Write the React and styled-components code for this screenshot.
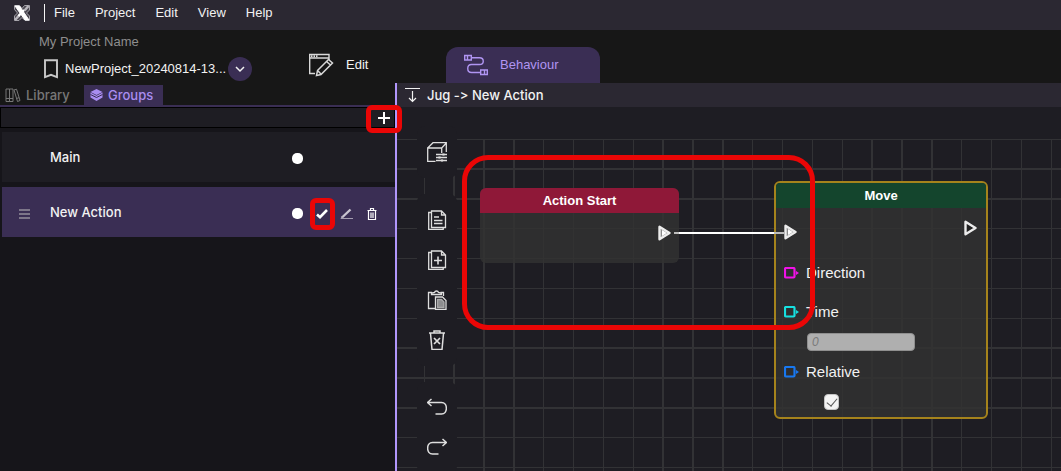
import React from 'react';
import styled, { createGlobalStyle, css } from 'styled-components';

const GlobalStyle = createGlobalStyle`
  * { box-sizing: border-box; }
  body {
    margin: 0;
    background: #16151a;
    color: #f2f2f2;
    font-family: "Liberation Sans", Arial, sans-serif;
    font-size: 13px;
    line-height: 16px;
  }
  button, input { font: inherit; color: inherit; }
`;

const panelFont = css`
  font-family: Inter, "Liberation Sans", sans-serif;
  font-size: 13px;
  font-weight: 500;
`;

const Page = styled.div`
  display: flex;
  flex-direction: column;
  min-height: 100vh;
  overflow: hidden;
`;

const BareButton = styled.button`
  display: flex;
  align-items: center;
  justify-content: center;
  padding: 0;
  border: 0;
  background: none;
  cursor: pointer;
`;

const Icon = styled.svg`
  display: block;
  flex: none;
  fill: none;
  stroke: currentColor;
`;

/* Menu bar */
const MenuBar = styled.nav`
  display: flex;
  align-items: center;
  height: 30px;
  padding: 0 0 4px 13px;
  background: #2b2832;
`;

const MenuList = styled.div`
  display: flex;
  align-items: center;
  gap: 20px;
  height: 18px;
  margin-left: 13px;
  padding-left: 9px;
  border-left: 1px solid #f5f5f5;
`;

/* Header */
const Header = styled.header`
  display: flex;
  height: 53px;
  background: #171717;
`;

const Project = styled.div`
  width: 308px;
  padding: 4px 0 0 39px;
`;

const ProjectLabel = styled.div`
  color: #8e8e8e;
`;

const ProjectRow = styled.div`
  display: flex;
  align-items: center;
  height: 24px;
  margin-top: 7px;
  padding-left: 5px;
  gap: 7px;
  white-space: nowrap;
`;

const ProjectName = styled.span`
  width: 156px;
`;

const RoundButton = styled(BareButton)`
  width: 24px;
  height: 24px;
  border-radius: 50%;
  background: #3a2e54;
`;

const ModeTab = styled(BareButton)`
  justify-content: flex-start;
  gap: 12px;
  height: 36px;
  margin-top: 17px;
  ${p => p.$active
    ? css`width: 154px; padding-left: 18px; background: #3a2e54; color: #b095f2; border-radius: 12px 12px 0 0;`
    : css`width: 138px;`}
`;

/* Main area */
const Main = styled.main`
  display: flex;
  flex: 1;
`;

const SidePanel = styled.aside`
  display: flex;
  flex-direction: column;
  flex: none;
  width: 397px;
  border-right: 2px solid #b196fb;
  background: #16151a;
`;

const PanelTabs = styled.div`
  display: flex;
  align-items: flex-end;
  height: 24px;
  padding-left: 5px;
  border-bottom: 2px solid #3a2e54;
  background: #171717;
`;

const PanelTab = styled(BareButton)`
  ${panelFont}
  justify-content: flex-start;
  gap: 5px;
  height: 20px;
  width: 79px;
  color: ${p => (p.$active ? '#a98df0' : '#777777')};
  background: ${p => (p.$active ? '#3a2e54' : 'transparent')};
  padding-left: ${p => (p.$active ? '6px' : '0')};
`;

const PanelActions = styled.div`
  display: flex;
  justify-content: flex-end;
  height: 21px;
  border: 1px solid #000;
  padding-right: 2px;
  background: #1e1d23;
`;

const AddButton = styled(BareButton)`
  position: relative;
  width: 16px;
  color: #fff;
`;

const Highlight = styled.span`
  position: absolute;
  z-index: 2;
  pointer-events: none;
  border: 5px solid #ea0606;
  ${p => p.$kind === 'add' && css`inset: -3px -10px -6px -10px; border-radius: 6px;`}
  ${p => p.$kind === 'tick' && css`inset: -8px -5px -8px -4px; border-radius: 6px;`}
  ${p => p.$kind === 'link' && css`left: 65px; top: 48px; width: 353px; height: 175px; border-radius: 26px;`}
`;

const GroupList = styled.ul`
  display: flex;
  flex-direction: column;
  gap: 5px;
  margin: 0;
  padding: 4px 0 0 2px;
  list-style: none;
`;

const GroupRow = styled.li`
  ${panelFont}
  display: flex;
  align-items: center;
  height: 50px;
  padding-left: 17px;
  background: ${p => (p.$active ? '#3a2e54' : '#1e1d23')};
`;

const Handle = styled.span`
  width: 11px;
  height: 10px;
  margin-top: 3px;
  border: solid #7d7689;
  border-width: 2px 0;
  background: linear-gradient(#7d7689, #7d7689) center / 100% 2px no-repeat;
  visibility: ${p => (p.$shown ? 'visible' : 'hidden')};
`;

const GroupName = styled.span`
  width: 234px;
  margin-left: 20px;
`;

const RowTools = styled.div`
  display: flex;
  align-items: center;
  gap: 9px;
  padding: 3px 0 0 5px;
`;

const RowTool = styled(BareButton)`
  position: relative;
  width: 16px;
  height: 16px;
  color: #fff;
`;

const Dot = styled.span`
  width: 11px;
  height: 11px;
  border-radius: 5px;
  background: #fff;
`;

/* Canvas */
const Workspace = styled.section`
  display: flex;
  flex-direction: column;
  flex: 1;
  min-width: 0;
`;

const Breadcrumb = styled.div`
  ${panelFont}
  display: flex;
  align-items: center;
  height: 24px;
  padding-left: 8px;
  gap: 7px;
  background: #2b2832;
  font-variant-ligatures: none;
  font-feature-settings: "calt" 0;
`;

const Canvas = styled.div`
  position: relative;
  flex: 1;
  padding-top: 32px;
  background: #1e1d23;
  overflow: hidden;
`;

const Grid = styled.svg`
  position: absolute;
  left: 0;
  top: 32px;
  width: 100%;
  height: 100%;
`;

const ToolColumn = styled.div`
  position: absolute;
  left: 20px;
  top: 19px;
  display: flex;
  flex-direction: column;
  gap: 16px;
`;

const ToolGroup = styled.div`
  display: flex;
  flex-direction: column;
  padding: 6px 0;
  border-radius: 8px;
  background: #1e1d23;
`;

const Tool = styled(BareButton)`
  width: 40px;
  height: 40px;
  color: #dedede;
  stroke-width: 1.3;
`;

const Node = styled.article`
  position: absolute;
  left: ${p => p.$x}px;
  top: ${p => p.$y}px;
  width: ${p => p.$w}px;
  border-radius: 6px;
  overflow: hidden;
  background: rgba(50, 50, 50, 0.84);
  ${p => p.$selected && css`border: 2px solid #a5831c;`}
`;

const NodeTitle = styled.h2`
  margin: 0;
  height: 25px;
  font-size: 13px;
  line-height: 25px;
  font-weight: 700;
  text-align: center;
  color: #fff;
  background: ${p => p.$color};
`;

const StartBody = styled.div`
  display: flex;
  justify-content: flex-end;
  height: 50px;
  padding: 12px 8px 0 0;
`;

const MoveBody = styled.div`
  padding: 12px 9px 0 8px;
  height: 209px;
`;

const FlowRow = styled.div`
  display: flex;
  justify-content: space-between;
  height: 20px;
  margin-bottom: 23px;
`;

const FlowSlot = styled.span`
  display: flex;
  align-self: ${p => (p.$raised ? 'flex-start' : 'flex-end')};
`;

const PortRow = styled.div`
  display: flex;
  align-items: center;
  gap: 6px;
  height: 20px;
  margin-bottom: ${p => (p.$gap ? '19px' : '0')};
  font-size: 15px;
`;

const FieldRow = styled.div`
  display: flex;
  height: ${p => p.$height}px;
  padding: ${p => (p.$tick ? '12px 0 0 40px' : '11px 0 0 23px')};
`;

const NumberInput = styled.input`
  width: 108px;
  height: 18px;
  padding: 0 4px;
  border: 1px solid #8f8f8f;
  border-radius: 4px;
  background: #afafaf;
  font-size: 12px;
  font-style: italic;
  &::placeholder { color: #7a7a7a; opacity: 1; }
`;

const TickBox = styled.input`
  appearance: none;
  position: relative;
  width: 15px;
  height: 16px;
  margin: 0;
  border: 1px solid #c4c4c4;
  border-radius: 4px;
  background: #f4f4f4;
  &:checked::after {
    content: "";
    position: absolute;
    left: 4px;
    top: 1px;
    width: 5px;
    height: 9px;
    border: solid #555;
    border-width: 0 1px 1px 0;
    transform: rotate(40deg);
  }
`;

const Wire = styled.span`
  position: absolute;
  left: 277px;
  top: 125px;
  width: 110px;
  height: 2px;
  background: linear-gradient(90deg, #bdbdbd 5px, #fff 5px, #fff 100px, #bdbdbd 100px);
`;

function Logo() {
  return (
    <Icon width="18" height="18" viewBox="0 0 18 18" aria-label="Home" role="img">
      <path d="M1.500 5.500v-4h5l2.500 3 2.500-3h5v4.500l-3 3 3 3v4.500h-4.500l-3-3-3 3h-4.500v-4.500l3-3z" stroke="#a5a3aa" fill="#4a4750" />
      <path d="M11.500 6.500L15.500 2M2 16l4.500-5" stroke="#b9b7bd" strokeWidth="2.500" />
      <path d="M2 2h4.500L16 16h-4z" fill="#fff" stroke="#fff" />
      <path d="M5.500 12l5.500-6" stroke="#fff" strokeWidth="2.400" />
    </Icon>
  );
}

function FlowPort({ linked }) {
  return (
    <Icon width="13" height="16" viewBox="0 0 13 16">
      <path d="M1.500 1.800v12.400L11.500 8z" stroke="#ececec" strokeWidth="2.400" strokeLinejoin="round" fill={linked ? '#8a8a8a' : '#222'} />
      {linked && <path d="M4 5v6L8.800 8z" fill="#fff" stroke="none" />}
    </Icon>
  );
}

function DataPort({ color }) {
  return (
    <Icon width="16" height="12" viewBox="0 0 16 12">
      <rect x="1" y="1" width="9.500" height="9.500" rx="1" stroke={color} strokeWidth="2.200" />
      <path d="M12 4l3 2-3 2z" fill={color} stroke="none" />
    </Icon>
  );
}

const toolIcons = {
  'Object properties': (
    <>
      <path d="M8.500 19.500H.7V6h14v5M.7 6L6 .7h13.300V10M14.700 6L19.300 1" />
      <path d="M9 12.500h11M9 15.500h11M9 18.500h11" />
      <path d="M16.500 11.500v2M12.500 14.500v2M15 17.500v2" strokeWidth="2.200" />
    </>
  ),
  Copy: (
    <>
      <path d="M4.500 1h10l4 4v12.500h-14zM14.500 1v4h4" />
      <path d="M4.500 2.500H1.700v17h14.500v-2" />
      <path d="M7 7h5M7 10.500h8.500M7 13.500h8.500" />
    </>
  ),
  Duplicate: (
    <>
      <path d="M4.500 1h10l4 4v12.500h-14zM14.500 1v4h4" />
      <path d="M4.500 2.500H1.700v17h14.500v-2" />
      <path d="M11 6.500v8M7 10.500h8" strokeWidth="1.600" />
    </>
  ),
  Paste: (
    <>
      <path d="M5 2.500H1.500v16h7M13.500 2.500h3V6" />
      <path d="M4.500 4.500V3l3-.5C8 .5 11 .5 11.500 2.500l3 .5v1.500z" />
      <path d="M8.500 7h7l3.500 3.500v9h-10.500z" />
      <path d="M10.500 9.500h4l2.500 2.500v5.500h-6.500z" fill="#8d8d8f" stroke="#aaa" />
    </>
  ),
  Delete: (
    <>
      <path d="M2 3h16M7 3V1h6v2M3.500 3.500l1.500 16h10l1.500-16" strokeWidth="1.500" />
      <path d="M7 8l6 6M13 8l-6 6" strokeWidth="1.700" />
    </>
  ),
  Undo: <path d="M4.500 1l-4 3.500 4 3.500M.5 4.500h14c6.500 0 6.500 11.500 0 11.500H8.500" strokeWidth="1.500" />,
  Redo: <path d="M15.500 1l4 3.500-4 3.500M19.500 4.500h-14c-6.500 0-6.500 11.500 0 11.500h6" strokeWidth="1.500" />,
};

const toolGroups = [
  ['Object properties'],
  ['Copy', 'Duplicate', 'Paste', 'Delete'],
  ['Undo', 'Redo'],
];

const gridLines = [
  [0, 2], [30, 2], [60, 2], [90, 1], [120, 1], [150, 1], [180, 1],
];

export default function App() {
  return (
    <Page>
      <GlobalStyle />
      <MenuBar>
        <Logo />
        <MenuList>
          {['File', 'Project', 'Edit', 'View', 'Help'].map(name => (
            <BareButton key={name}>{name}</BareButton>
          ))}
        </MenuList>
      </MenuBar>

      <Header>
        <Project>
          <ProjectLabel>My Project Name</ProjectLabel>
          <ProjectRow>
            <Icon width="14" height="20" viewBox="0 0 14 20">
              <path d="M1 1.200h12v17L7 15.800 1 18.200z" stroke="#c9c9c9" strokeWidth="1.900" />
            </Icon>
            <ProjectName>NewProject_20240814-13...</ProjectName>
            <RoundButton aria-label="Choose project">
              <Icon width="10" height="8" viewBox="0 0 10 8">
                <path d="M1 2l4 4 4-4" strokeWidth="1.500" />
              </Icon>
            </RoundButton>
          </ProjectRow>
        </Project>
        <ModeTab>
          <Icon width="26" height="24" viewBox="0 0 26 24">
            <path d="M21 7V1.500H1.700V20.500H7M1.500 5H21" stroke="#d8d8d8" strokeWidth="1.400" />
            <path d="M3 3.200h7" stroke="#d8d8d8" strokeWidth="2" strokeDasharray="1.500 1" />
            <path d="M9.500 17.500L20.500 6.500l4 3.500L13 21.500l-4.500 1zM9.500 17.500l3.500 3.500M18.500 8.500l4 3.500" stroke="#d8d8d8" strokeWidth="1.500" />
          </Icon>
          Edit
        </ModeTab>
        <ModeTab $active>
          <Icon width="24" height="22" viewBox="0 0 24 22">
            <path d="M.7 1.500h6.600v4.500H.7zM3.500 2v4M16.700 16h6.600v4.500h-6.600zM20.500 16v4" strokeWidth="1.400" />
            <path d="M8 3.800h7.500c5 0 5 6.700 0 6.700h-8c-5 0-5 8 0 8H16" strokeWidth="1.400" />
          </Icon>
          Behaviour
        </ModeTab>
      </Header>

      <Main>
        <SidePanel>
          <PanelTabs>
            <PanelTab>
              <Icon width="16" height="15" viewBox="0 0 16 15">
                <path d="M1 1h3.500v12.500H1zM4.500 1H8v12.500H4.500zM1 10.500h7M9 2l2.500-.8L15 12.500l-2.500 1zM11.500 10.500l2.500-.8" />
              </Icon>
              Library
            </PanelTab>
            <PanelTab $active>
              <Icon width="13" height="14" viewBox="0 0 13 14">
                <path d="M6.500 1l6 3-6 3-6-3z" fill="currentColor" stroke="none" />
                <path d="M.5 4.500v5l6 3.500 6-3.500v-5l-6 3.300z" fill="currentColor" stroke="none" />
                <path d="M.5 6.500l6 3 6-3" stroke="#3a2e54" />
              </Icon>
              Groups
            </PanelTab>
          </PanelTabs>
          <PanelActions>
            <AddButton aria-label="Add group">
              <Icon width="12" height="12" viewBox="0 0 12 12">
                <path d="M6 0v12M0 6h12" strokeWidth="2" />
              </Icon>
              <Highlight $kind="add" />
            </AddButton>
          </PanelActions>
          <GroupList>
            <GroupRow>
              <Handle />
              <GroupName>Main</GroupName>
              <RowTools>
                <RowTool aria-label="Main colour"><Dot /></RowTool>
              </RowTools>
            </GroupRow>
            <GroupRow $active>
              <Handle $shown />
              <GroupName>New Action</GroupName>
              <RowTools>
                <RowTool aria-label="New Action colour"><Dot /></RowTool>
                <RowTool aria-label="Confirm">
                  <Icon width="12" height="10" viewBox="0 0 12 10">
                    <path d="M1 5.500l3 2.700L11 1" strokeWidth="2.600" />
                  </Icon>
                  <Highlight $kind="tick" />
                </RowTool>
                <RowTool aria-label="Rename">
                  <Icon width="14" height="12" viewBox="0 0 14 12">
                    <path d="M2 9.500L10.500 1.500" stroke="#c9c5d0" strokeWidth="2.400" />
                    <path d="M1 11l1-3M1 10.500h12" stroke="#a49db0" />
                  </Icon>
                </RowTool>
                <RowTool aria-label="Delete">
                  <Icon width="10" height="12" viewBox="0 0 10 12">
                    <path d="M.5 2.500h9M3.500 2.500v-2h3v2M1.500 3v8.500h7V3M4 4.500v5.500M6 4.500v5.500" strokeWidth="1.200" />
                  </Icon>
                </RowTool>
              </RowTools>
            </GroupRow>
          </GroupList>
        </SidePanel>

        <Workspace>
          <Breadcrumb>
            <Icon width="15" height="16" viewBox="0 0 15 16">
              <path d="M0 1.500h15M7.500 4v10.500M4 11l3.500 3.500L11 11" strokeWidth="1.200" />
            </Icon>
            Jug -&gt; New Action
          </Breadcrumb>
          <Canvas>
            <Grid aria-hidden="true">
              <defs>
                <pattern id="cols" x="56" y="0" width="209" height="209" patternUnits="userSpaceOnUse">
                  {gridLines.map(([at, w]) => (
                    <rect key={at} x={at} y="0" width={w} height="209" fill="#323235" />
                  ))}
                </pattern>
                <pattern id="rows" x="0" y="-1" width="209" height="209" patternUnits="userSpaceOnUse">
                  {gridLines.map(([at, w]) => (
                    <rect key={at} x="0" y={at} width="209" height={w} fill="#323235" />
                  ))}
                </pattern>
              </defs>
              <rect width="100%" height="100%" fill="url(#cols)" />
              <rect width="100%" height="100%" fill="url(#rows)" />
            </Grid>

            <ToolColumn>
              {toolGroups.map(group => (
                <ToolGroup key={group[0]}>
                  {group.map(name => (
                    <Tool key={name} aria-label={name}>
                      <Icon width="20" height="20" viewBox="0 0 20 20">{toolIcons[name]}</Icon>
                    </Tool>
                  ))}
                </ToolGroup>
              ))}
            </ToolColumn>

            <Node $x={83} $y={81} $w={199}>
              <NodeTitle $color="#8f1838">Action Start</NodeTitle>
              <StartBody><FlowPort linked /></StartBody>
            </Node>

            <Node $x={377} $y={74} $w={214} $selected>
              <NodeTitle $color="#14452d">Move</NodeTitle>
              <MoveBody>
                <FlowRow>
                  <FlowSlot><FlowPort linked /></FlowSlot>
                  <FlowSlot $raised><FlowPort /></FlowSlot>
                </FlowRow>
                <PortRow $gap><DataPort color="#f012e8" />Direction</PortRow>
                <PortRow><DataPort color="#16e0e0" /><label htmlFor="time">Time</label></PortRow>
                <FieldRow $height={40}><NumberInput id="time" placeholder="0" /></FieldRow>
                <PortRow><DataPort color="#1878f0" /><label htmlFor="relative">Relative</label></PortRow>
                <FieldRow $height={30} $tick><TickBox id="relative" type="checkbox" defaultChecked /></FieldRow>
              </MoveBody>
            </Node>

            <Wire />
            <Highlight $kind="link" />
          </Canvas>
        </Workspace>
      </Main>
    </Page>
  );
}
